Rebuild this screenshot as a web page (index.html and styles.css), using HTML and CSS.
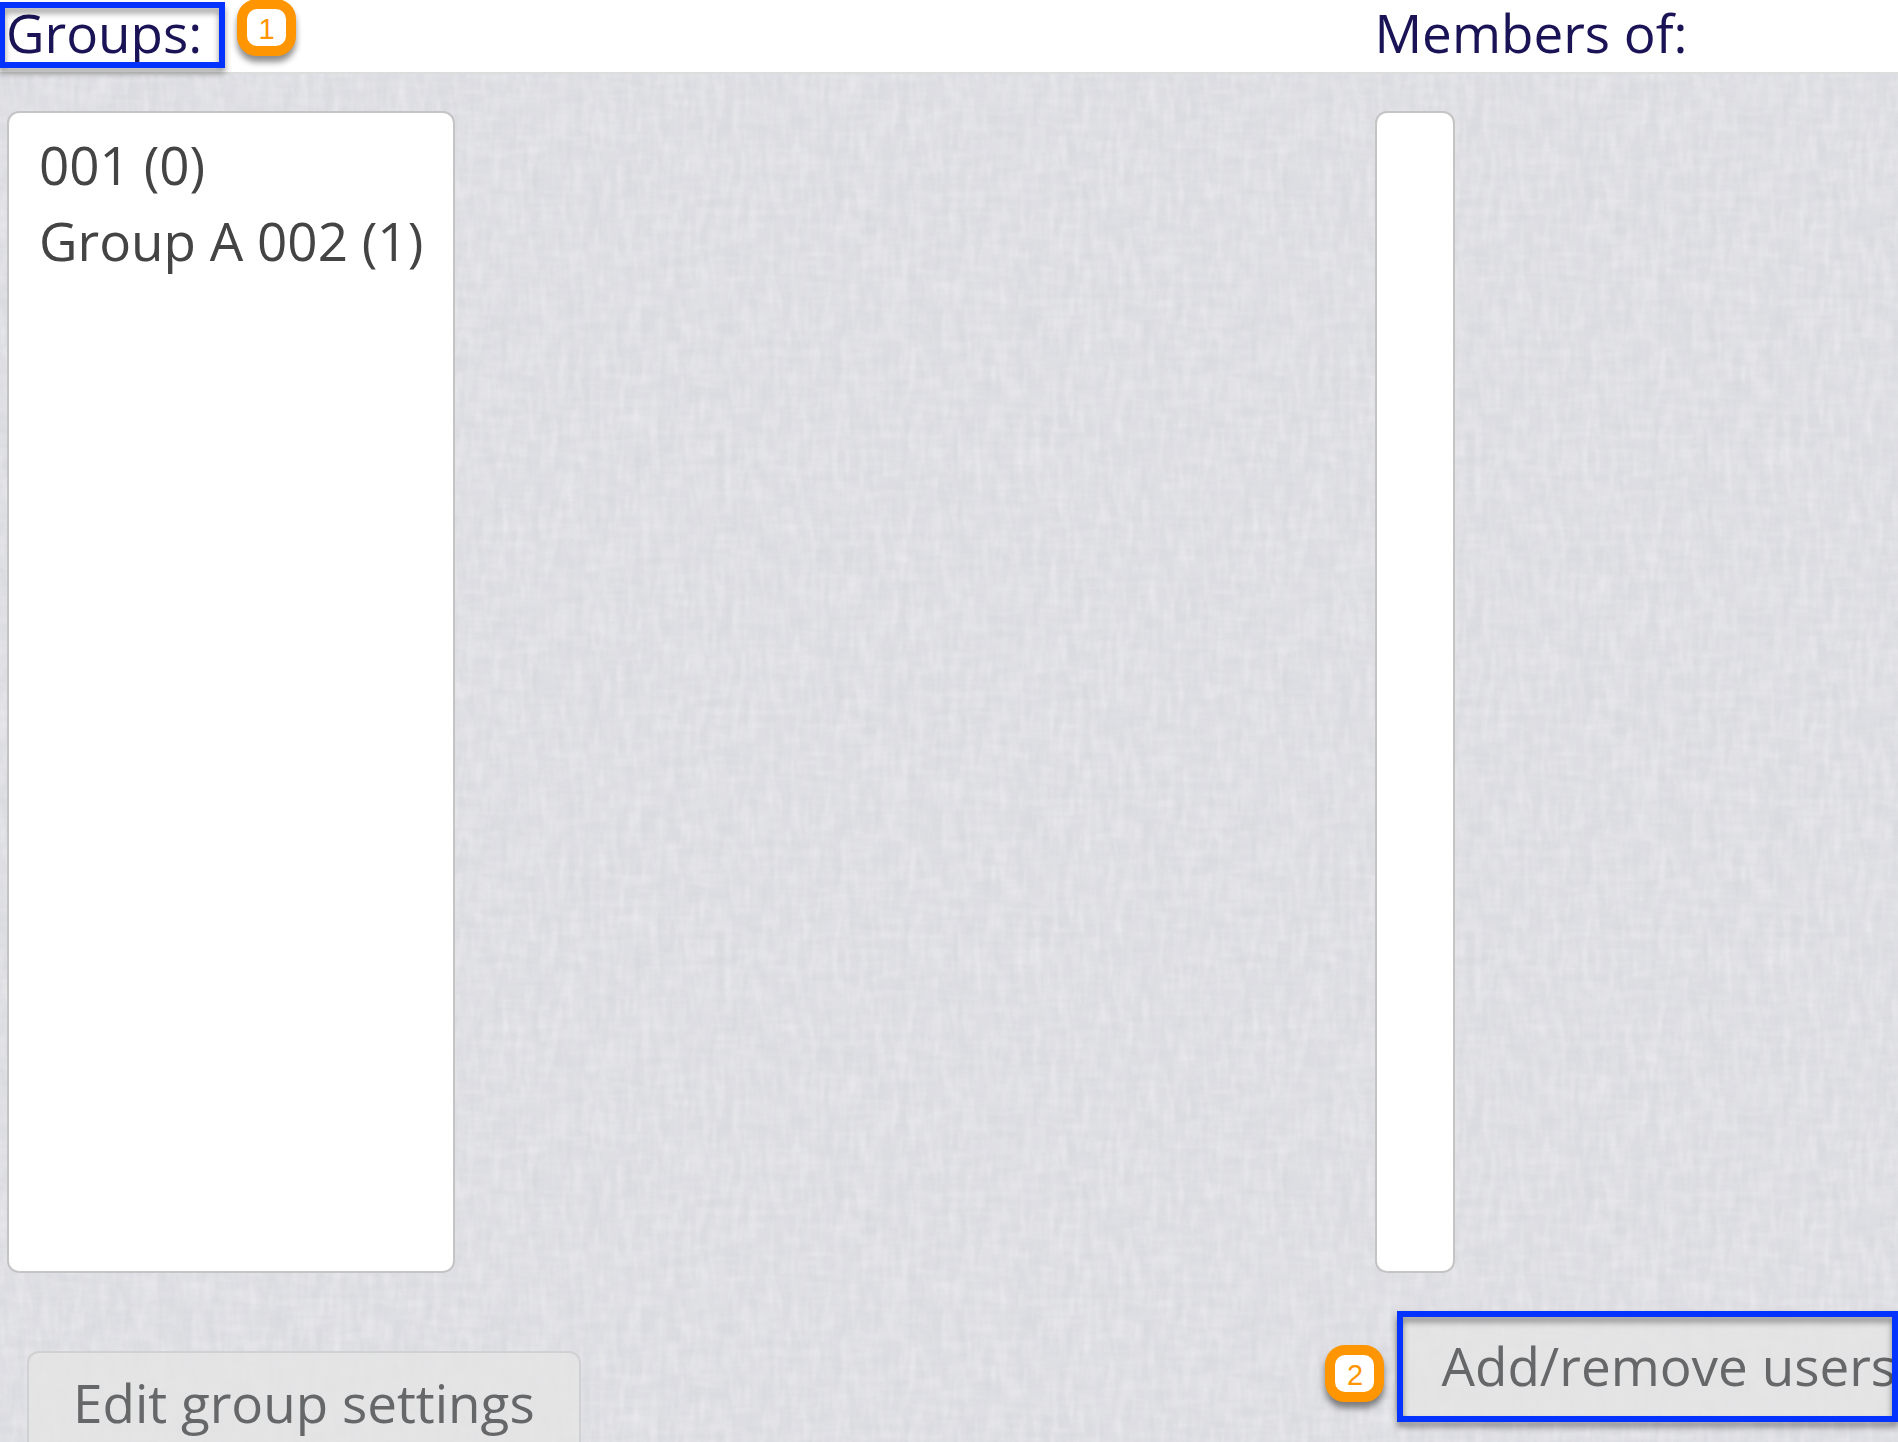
FILE: index.html
```html
<!DOCTYPE html>
<html lang="en">
<head>
<meta charset="utf-8">
<title>Groups</title>
<link rel="stylesheet" href="styles.css">
</head>
<body>
<main class="page">
  <header class="columns titles">
    <div class="cell">
      <div class="marked">
        <label class="title" for="groups">Groups:</label>
        <span class="frame frame-title"></span>
        <span class="step step-title">1</span>
      </div>
    </div>
    <div class="cell"><label class="title" for="members">Members of:</label></div>
  </header>
  <div class="columns body">
    <section class="cell">
      <select class="list" id="groups" multiple>
        <option>001 (0)</option>
        <option>Group A 002 (1)</option>
      </select>
      <div class="action action-edit">
        <button class="button" type="button">Edit group settings</button>
      </div>
    </section>
    <section class="cell">
      <select class="list" id="members" multiple></select>
      <div class="action action-users">
        <button class="button" type="button">Add/remove users</button>
        <span class="frame frame-users"></span>
        <span class="step step-users">2</span>
      </div>
    </section>
  </div>
</main>
</body>
</html>
```

FILE: styles.css
```css
* {
  box-sizing: border-box;
}

body {
  margin: 0;
  font-family: "Open Sans", sans-serif;
  font-size: 53px;
  line-height: 72px;
  color: #444;
}

.page {
  display: flex;
  flex-direction: column;
  height: 100vh;
  overflow: hidden;
}

.columns {
  display: grid;
  grid-template-columns: 72.1% minmax(0, 1fr);
}

.cell {
  padding-left: 7px;
}

.titles {
  position: relative;
  z-index: 1;
  padding-bottom: 6px;
  line-height: 66px;
  color: #1a1457;
}

.titles .cell {
  padding-left: 6px;
}

.title {
  display: block;
}

.marked {
  position: relative;
}

.body {
  flex: 1;
  padding-top: 37px;
  border-top: 2px solid #dcdddd;
  background-color: #dddde3;
  /* woven linen: vertical and horizontal threads, each a dark and a light layer */
  background-image:
    url("data:image/svg+xml,%3Csvg xmlns='http://www.w3.org/2000/svg' width='750' height='500'%3E%3Cfilter id='a' x='0' y='0' width='100%25' height='100%25'%3E%3CfeTurbulence type='fractalNoise' baseFrequency='.12 .03' numOctaves='2' seed='4' stitchTiles='stitch'/%3E%3CfeColorMatrix values='0 0 0 0 .6 0 0 0 0 .63 0 0 0 0 .65 1 0 0 0 -.4'/%3E%3C/filter%3E%3Crect width='750' height='500' filter='url(%23a)' opacity='.5'/%3E%3C/svg%3E"),
    url("data:image/svg+xml,%3Csvg xmlns='http://www.w3.org/2000/svg' width='750' height='500'%3E%3Cfilter id='b' x='0' y='0' width='100%25' height='100%25'%3E%3CfeTurbulence type='fractalNoise' baseFrequency='.03 .12' numOctaves='2' seed='9' stitchTiles='stitch'/%3E%3CfeColorMatrix values='0 0 0 0 .6 0 0 0 0 .63 0 0 0 0 .65 1 0 0 0 -.4'/%3E%3C/filter%3E%3Crect width='750' height='500' filter='url(%23b)' opacity='.3'/%3E%3C/svg%3E"),
    url("data:image/svg+xml,%3Csvg xmlns='http://www.w3.org/2000/svg' width='750' height='500'%3E%3Cfilter id='c' x='0' y='0' width='100%25' height='100%25'%3E%3CfeTurbulence type='fractalNoise' baseFrequency='.12 .03' numOctaves='2' seed='21' stitchTiles='stitch'/%3E%3CfeColorMatrix values='0 0 0 0 1 0 0 0 0 1 0 0 0 0 1 1 0 0 0 -.4'/%3E%3C/filter%3E%3Crect width='750' height='500' filter='url(%23c)' opacity='.6'/%3E%3C/svg%3E"),
    url("data:image/svg+xml,%3Csvg xmlns='http://www.w3.org/2000/svg' width='750' height='500'%3E%3Cfilter id='d' x='0' y='0' width='100%25' height='100%25'%3E%3CfeTurbulence type='fractalNoise' baseFrequency='.03 .12' numOctaves='2' seed='33' stitchTiles='stitch'/%3E%3CfeColorMatrix values='0 0 0 0 1 0 0 0 0 1 0 0 0 0 1 1 0 0 0 -.4'/%3E%3C/filter%3E%3Crect width='750' height='500' filter='url(%23d)' opacity='.4'/%3E%3C/svg%3E");
}

.list {
  display: block;
  min-width: 80px;
  height: 1162px;
  margin: 0;
  padding: 14px 0;
  border: 2px solid #c4c4c4;
  border-radius: 12px;
  outline: 0;
  background: #fff;
  font: inherit;
  color: #444;
}

.list option {
  padding: 1px 30px 2px;
}

.action {
  position: relative;
  margin-left: 20px;
}

.action-edit {
  margin-top: 78px;
}

.action-users {
  margin-top: 41px;
}

.button {
  display: block;
  padding: 14px 44px;
  border: 2px solid #d0d1d2;
  border-radius: 12px;
  background: rgba(229, 229, 229, 0.8);
  font: inherit;
  color: #666769;
  white-space: nowrap;
}

/* annotation marks drawn over the form */
.frame {
  position: absolute;
  border: 6px solid #0433ff;
  filter: drop-shadow(0 5px 3px rgba(0, 0, 0, 0.4));
}

.frame-title {
  top: 2px;
  left: -7px;
  width: 226px;
  height: 66px;
}

.frame-users {
  top: -3px;
  left: 2px;
  right: 0;
  height: 111px;
}

.step {
  position: absolute;
  width: 59px;
  height: 57px;
  border: 10px solid #ff9500;
  border-radius: 20px;
  background: #fff;
  box-shadow: 0 6px 6px rgba(0, 0, 0, 0.45);
  font: 29px/41px "Liberation Sans", sans-serif;
  text-align: center;
  color: #ff9500;
}

.step-title {
  top: -1px;
  left: 231px;
}

.step-users {
  top: 31px;
  left: -70px;
}
```
